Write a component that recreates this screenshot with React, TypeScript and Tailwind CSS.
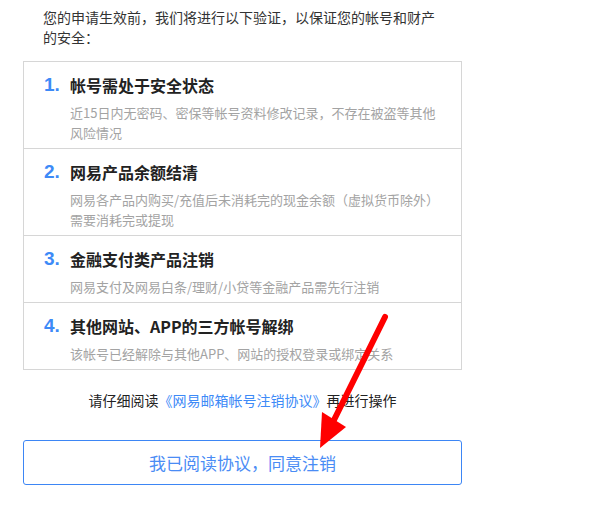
import React from 'react';

const steps = [
  {
    title: '帐号需处于安全状态',
    desc: '近15日内无密码、密保等帐号资料修改记录，不存在被盗等其他风险情况',
  },
  {
    title: '网易产品余额结清',
    desc: '网易各产品内购买/充值后未消耗完的现金余额（虚拟货币除外）需要消耗完或提现',
  },
  {
    title: '金融支付类产品注销',
    desc: '网易支付及网易白条/理财/小贷等金融产品需先行注销',
  },
  {
    title: '其他网站、APP的三方帐号解绑',
    desc: '该帐号已经解除与其他APP、网站的授权登录或绑定关系',
  },
];

const cjk = { fontFamily: '"Microsoft YaHei", "Noto Sans CJK SC", sans-serif' };

const App = () => {
  return (
    <div className="relative w-[600px] h-[514px] bg-white overflow-hidden" style={cjk}>
      <div className="pl-[23px] pt-[7px] w-[462px]">
        <p className="ml-[20px] w-[400px] text-[14px] leading-[20px] text-[#333]">
          您的申请生效前，我们将进行以下验证，以保证您的帐号和财产的安全：
        </p>

        <div className="mt-[14px] border border-[#d6d6d6]">
          {steps.map((s, i) => (
            <div
              key={i}
              className={`flex pl-[20px] pr-[22px] pt-[11px] pb-[5px] ${i > 0 ? 'border-t border-[#d6d6d6]' : ''}`}
            >
              <div
                className="w-[26px] shrink-0 text-[19px] leading-[24px] font-bold text-[#3d8af7]"
                style={{ fontFamily: '"Liberation Sans", Arial, sans-serif' }}
              >
                {i + 1}.
              </div>
              <div className="flex-1">
                <div className="text-[16px] leading-[24px] font-bold text-[#222]">{s.title}</div>
                <div className="mt-[6px] text-[13px] leading-[20px] text-[#a3a3a3]">{s.desc}</div>
              </div>
            </div>
          ))}
        </div>

        <p className="mt-[20px] text-center text-[14px] leading-[20px] text-[#222]">
          请仔细阅读<span className="text-[#3d8af7]">《网易邮箱帐号注销协议》</span>再进行操作
        </p>

        <button className="mt-[30px] w-full h-[45px] rounded-[3px] border border-[#3d86f5] bg-white text-[17px] text-[#4a8cf5]">
          我已阅读协议，同意注销
        </button>
      </div>

      <svg className="absolute left-0 top-0 pointer-events-none" width="600" height="514">
        <line x1="385" y1="317" x2="334" y2="420" stroke="#ff0000" strokeWidth="6" strokeLinecap="round" />
        <polygon points="320,448 322,412 346,427" fill="#ff0000" />
      </svg>
    </div>
  );
};

export default App;
